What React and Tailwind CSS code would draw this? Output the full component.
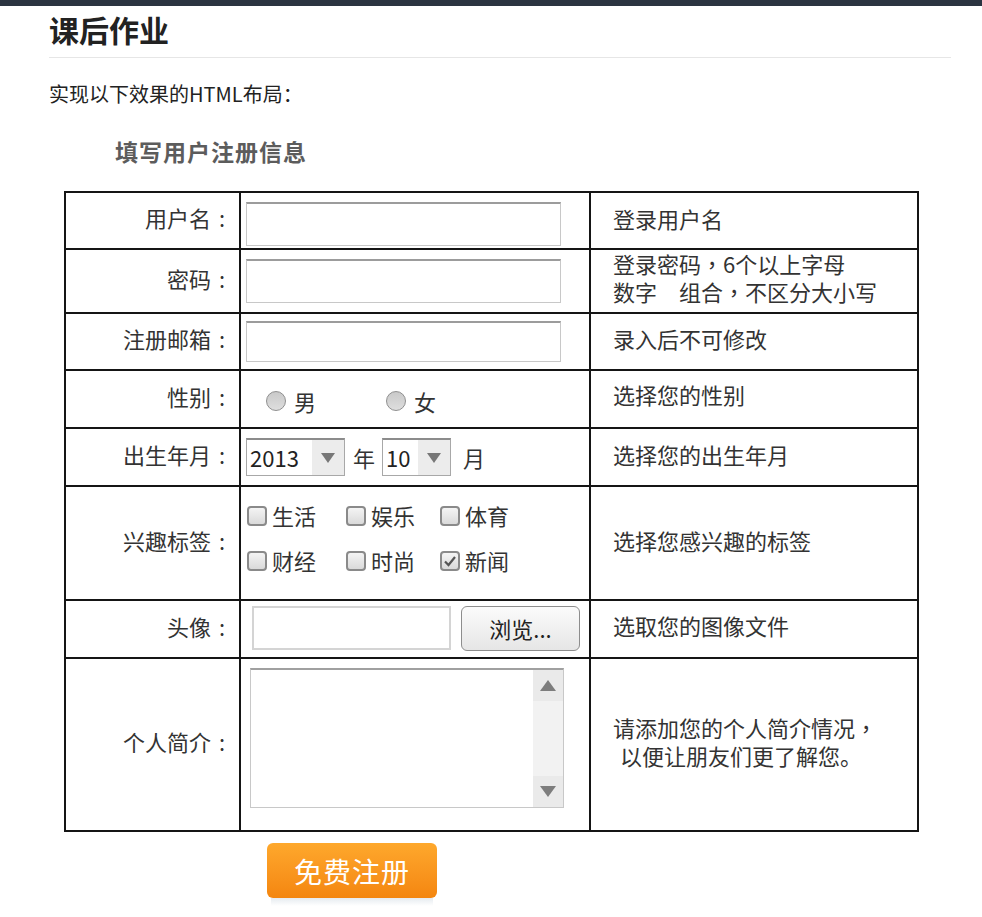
import React from "react";

const cell = "border-r-2 border-b-2 border-[#151515]";
const label = `${cell} flex items-center justify-end pr-[6px] pb-[6px]`;
const note = `${cell} flex flex-col justify-center pl-[22px] leading-[28px]`;
const field = "border border-[#c8c8c8] border-t-2 border-t-[#9c9c9c] bg-white";

// full-width punctuation drawn centred in its box, as in traditional-style fonts
function P({ children }) {
  return <span className="font-['Noto_Sans_CJK_TC','Noto_Sans',sans-serif]">{children}</span>;
}

function Label({ text }) {
  return (
    <div className={label}>
      {text}
      <span className="inline-block w-[1em] text-center">:</span>
    </div>
  );
}

function Radio({ text, className }) {
  return (
    <span className={`flex items-center ${className}`}>
      <span className="w-[20px] h-[20px] rounded-full border border-[#8f8f8f] bg-gradient-to-b from-[#c9c9c9] to-[#dedede]"></span>
      <span className="ml-[8px]">{text}</span>
    </span>
  );
}

function Check({ text, checked }) {
  return (
    <span className="flex items-center">
      <span className="w-[20px] h-[20px] rounded-[4px] border-2 border-[#8a8a8a] bg-gradient-to-b from-[#f4f4f4] to-[#dadada] flex items-center justify-center">
        {checked && (
          <svg width="14" height="12" viewBox="0 0 14 12">
            <path d="M2 6.5 L5.5 10 L12 2" fill="none" stroke="#555" strokeWidth="2.2" />
          </svg>
        )}
      </span>
      <span className="ml-[5px]">{text}</span>
    </span>
  );
}

function Select({ value, width }) {
  return (
    <span className={`flex h-[38px] border border-[#a8a8a8] border-t-2 border-t-[#8c8c8c] bg-white ${width}`}>
      <span className="flex-1 flex items-center pl-[3px] text-[22px] text-[#222]">{value}</span>
      <span className="w-[32px] bg-[#ececec] flex items-center justify-center">
        <svg width="16" height="12" viewBox="0 0 16 12">
          <path d="M1 1 H15 L8 11 Z" fill="#777" />
        </svg>
      </span>
    </span>
  );
}

export default function App() {
  return (
    <div className="min-h-screen bg-white font-['Noto_Sans_CJK_SC','Noto_Sans',sans-serif] text-[#333]">
      <div className="h-[6px] bg-[#2b3441]"></div>
      <div className="pl-[49px] pr-[31px]">
        <h1 className="mt-[5px] pb-[10px] border-b border-[#e6e6e6] text-[30px] leading-[36px] font-bold text-[#222]">
          课后作业
        </h1>
        <p className="mt-[22px] text-[20px] leading-[28px] text-[#222]">实现以下效果的HTML布局：</p>

        <div className="mt-[27px] ml-[66px] text-[23px] leading-[32px] font-bold text-[#5c5c5c] tracking-[1px]">
          填写用户注册信息
        </div>

        <div className="mt-[24px] ml-[15px] w-[855px] border-l-2 border-t-2 border-[#151515] grid grid-cols-[175px_350px_328px] grid-rows-[57px_64px_57px_58px_58px_114px_58px_173px] text-[22px] text-[#333]">
          <Label text="用户名" />
          <div className={`${cell} pt-[9px] pl-[5px]`}>
            <div className={`${field} w-[315px] h-[44px]`}></div>
          </div>
          <div className={`${note} pb-[6px]`}>登录用户名</div>

          <Label text="密码" />
          <div className={`${cell} pt-[9px] pl-[5px]`}>
            <div className={`${field} w-[315px] h-[44px]`}></div>
          </div>
          <div className={`${note} pb-[8px]`}>
            <span>
              登录密码<P>，</P>6个以上字母
            </span>
            <span>
              数字　组合<P>，</P>不区分大小写
            </span>
          </div>

          <Label text="注册邮箱" />
          <div className={`${cell} pt-[7px] pl-[5px]`}>
            <div className={`${field} w-[315px] h-[41px]`}></div>
          </div>
          <div className={`${note} pb-[8px]`}>录入后不可修改</div>

          <Label text="性别" />
          <div className={`${cell} flex items-center pl-[25px] pt-[4px]`}>
            <Radio text="男" />
            <Radio text="女" className="ml-[70px]" />
          </div>
          <div className={`${note} pb-[10px]`}>选择您的性别</div>

          <Label text="出生年月" />
          <div className={`${cell} flex items-center pl-[5px]`}>
            <Select value="2013" width="w-[99px]" />
            <span className="ml-[8px]">年</span>
            <span className="ml-[7px]">
              <Select value="10" width="w-[69px]" />
            </span>
            <span className="ml-[12px]">月</span>
          </div>
          <div className={`${note} pb-[6px]`}>选择您的出生年月</div>

          <Label text="兴趣标签" />
          <div className={`${cell} pl-[6px] pt-[12px] grid grid-cols-[99px_94px_100px] gap-y-[12px] content-start`}>
            <Check text="生活" />
            <Check text="娱乐" />
            <Check text="体育" />
            <Check text="财经" />
            <Check text="时尚" />
            <Check text="新闻" checked />
          </div>
          <div className={`${note} pl-[15px] pb-[6px]`}>选择您感兴趣的标签</div>

          <Label text="头像" />
          <div className={`${cell} flex items-center pl-[11px] pb-[2px]`}>
            <div className="w-[199px] h-[44px] border-2 border-[#d4d4d4] bg-white"></div>
            <button className="ml-[10px] w-[119px] h-[45px] rounded-[6px] border border-[#8d8d8d] bg-gradient-to-b from-[#fbfbfb] to-[#e6e6e6] text-[22px] text-[#222]">
              浏览...
            </button>
          </div>
          <div className={`${note} pb-[8px]`}>选取您的图像文件</div>

          <Label text="个人简介" />
          <div className={`${cell} pt-[9px] pl-[9px]`}>
            <div className="w-[314px] h-[140px] border border-[#c8c8c8] border-t-2 border-t-[#a0a0a0] bg-white flex justify-end">
              <div className="w-[30px] h-full bg-[#f2f2f2] flex flex-col justify-between">
                <div className="h-[31px] bg-[#eaeaea] flex items-center justify-center">
                  <svg width="18" height="13" viewBox="0 0 18 13">
                    <path d="M1 12 H17 L9 1 Z" fill="#7d7d7d" />
                  </svg>
                </div>
                <div className="h-[31px] bg-[#eaeaea] flex items-center justify-center">
                  <svg width="18" height="13" viewBox="0 0 18 13">
                    <path d="M1 1 H17 L9 12 Z" fill="#7d7d7d" />
                  </svg>
                </div>
              </div>
            </div>
          </div>
          <div className={`${note} pl-[15px] pb-[8px]`}>
            <span>
              请添加您的个人简介情况<P>，</P>
            </span>
            <span className="pl-[7px]">以便让朋友们更了解您。</span>
          </div>
        </div>

        <div className="ml-[218px] mt-[11px] w-[170px]">
          <button className="w-[170px] h-[55px] rounded-[6px] bg-gradient-to-b from-[#fea82c] to-[#f4860f] text-white text-[28px] tracking-[1px]">
            免费注册
          </button>
          <div className="mx-[4px] h-[8px] bg-gradient-to-b from-[#e6ebf0] to-white"></div>
        </div>
      </div>
    </div>
  );
}
